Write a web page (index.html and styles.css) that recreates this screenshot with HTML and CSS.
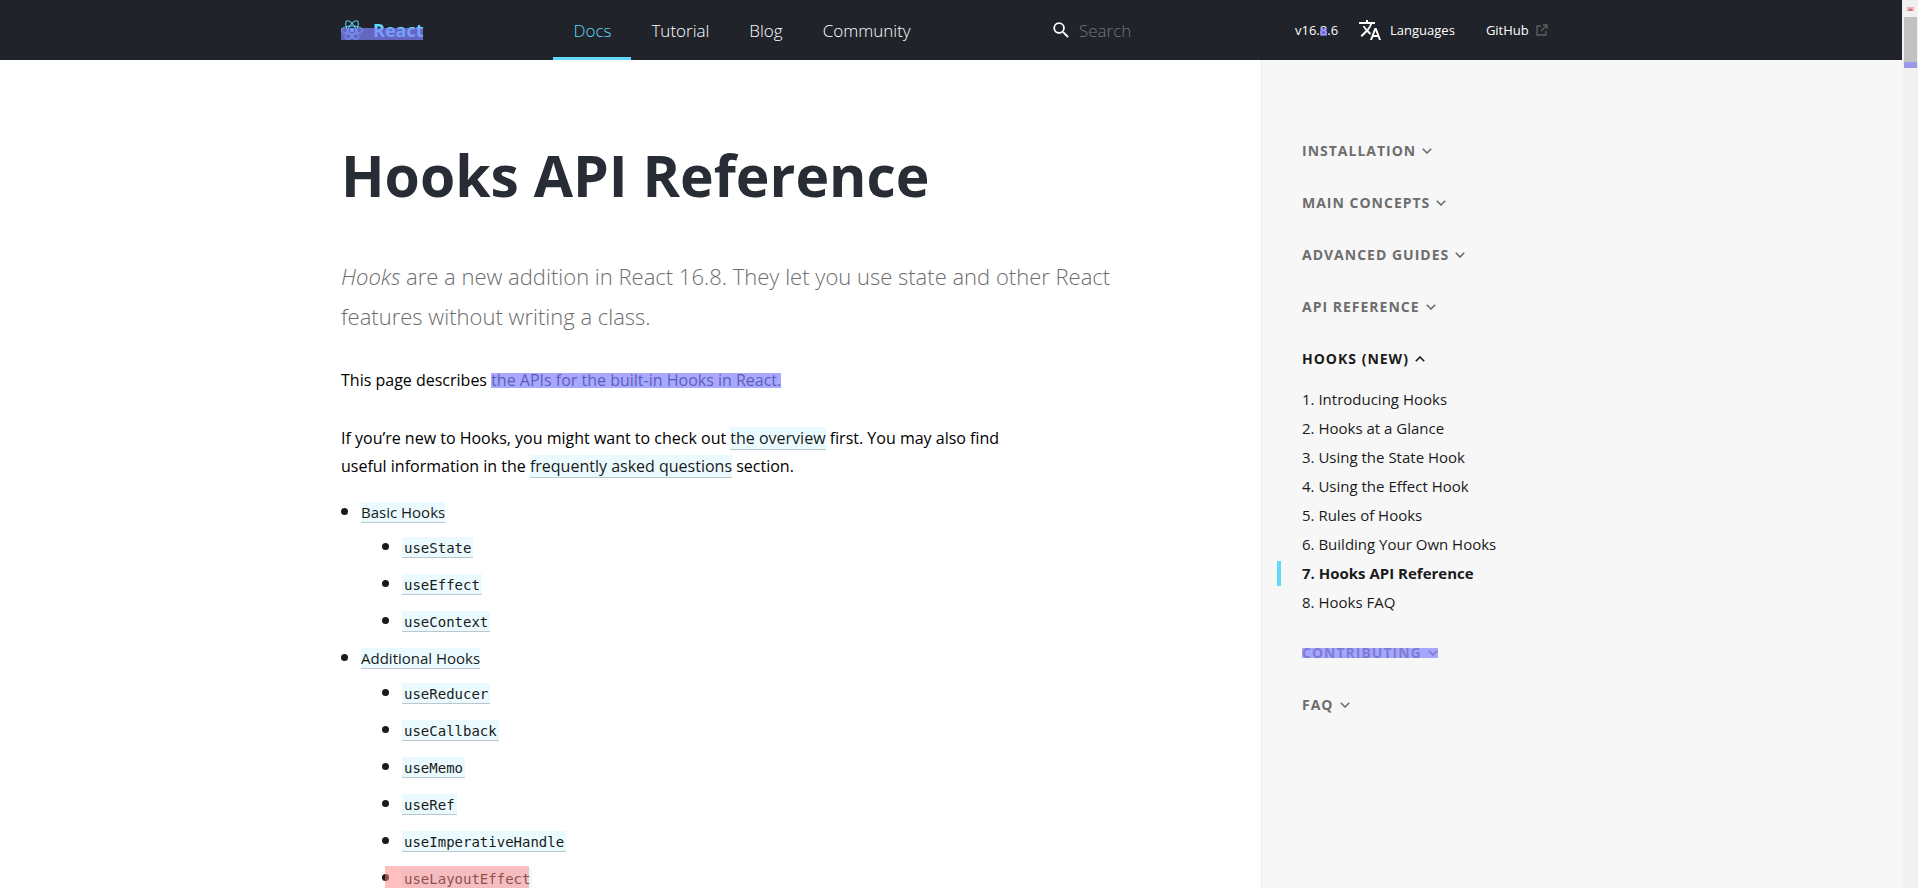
FILE: index.html
```html
<!DOCTYPE html>
<html lang="en">
<head>
<meta charset="utf-8">
<title>Hooks API Reference – React</title>
<link rel="stylesheet" href="styles.css">
</head>
<body>
<svg class="defs" aria-hidden="true">
  <symbol id="chevron" viewBox="0 0 10 6"><path d="M.8.8 5 5 9.200.8" fill="none" stroke="currentColor" stroke-width="1.600"/></symbol>
</svg>
<div class="page">
  <header class="header">
    <a class="brand mark mark-brand" href="#">
      <svg class="brand-logo" viewBox="-11.500 -10.232 23 20.463" aria-hidden="true">
        <circle r="2.050" fill="currentColor"/>
        <g stroke="currentColor" fill="none"><ellipse rx="11" ry="4.200"/><ellipse rx="11" ry="4.200" transform="rotate(60)"/><ellipse rx="11" ry="4.200" transform="rotate(120)"/></g>
      </svg>
      <span>React</span>
    </a>
    <nav class="nav">
      <a class="nav-link active" href="#">Docs</a>
      <a class="nav-link" href="#">Tutorial</a>
      <a class="nav-link" href="#">Blog</a>
      <a class="nav-link" href="#">Community</a>
    </nav>
    <label class="search">
      <svg viewBox="0 0 16 16" aria-hidden="true"><path d="M11.400 10.100h-.7l-.3-.3a5.700 5.700 0 1 0-.6.6l.3.3v.7l4.400 4.400 1.300-1.300zM6.100 10.100a4 4 0 1 1 0-8 4 4 0 0 1 0 8z" fill="#fff"/></svg>
      <input class="search-input" type="search" placeholder="Search" aria-label="Search docs">
    </label>
    <div class="links">
      <a class="version" href="#">v16.<span class="mark mark-digit">8</span>.6</a>
      <a class="languages" href="#">
        <svg viewBox="1 2 22 20" aria-hidden="true"><path d="M12.870 15.070l-2.540-2.510.03-.03A17.520 17.520 0 0 0 14.070 6H17V4h-7V2H8v2H1v1.990h11.170C11.500 7.920 10.440 9.750 9 11.350 8.070 10.320 7.300 9.190 6.690 8h-2c.73 1.630 1.730 3.170 2.980 4.560l-5.090 5.020L4 19l5-5 3.110 3.110.76-2.040zM18.500 10h-2L12 22h2l1.120-3h4.750L21 22h2l-4.500-12zm-2.620 7l1.620-4.330L19.120 17h-3.240z" fill="#fff"/></svg>
        <span>Languages</span>
      </a>
      <a class="github" href="#">
        <span>GitHub</span>
        <svg viewBox="0 0 12 12" aria-hidden="true"><path d="M5 2H1v9h9V7M7 1h4v4M11 1 5 7" fill="none" stroke="#606060" stroke-width="1.300"/></svg>
      </a>
    </div>
  </header>
  <div class="content">
    <main class="article">
      <h1>Hooks API Reference</h1>
      <p class="intro"><em>Hooks</em> are a new addition in React 16.8. They let you use state and other React features without writing a class.</p>
      <p>This page describes <span class="mark mark-text">the APIs for the built-in Hooks in React.</span></p>
      <p class="before-list">If you’re new to Hooks, you might want to check out <a href="#">the overview</a> first. You may also find useful information in the <a href="#">frequently asked questions</a> section.</p>
      <ul class="toc">
        <li><a href="#">Basic Hooks</a>
          <ul>
            <li><a href="#"><code>useState</code></a></li>
            <li><a href="#"><code>useEffect</code></a></li>
            <li><a href="#"><code>useContext</code></a></li>
          </ul>
        </li>
        <li><a href="#">Additional Hooks</a>
          <ul>
            <li><a href="#"><code>useReducer</code></a></li>
            <li><a href="#"><code>useCallback</code></a></li>
            <li><a href="#"><code>useMemo</code></a></li>
            <li><a href="#"><code>useRef</code></a></li>
            <li><a href="#"><code>useImperativeHandle</code></a></li>
            <li><a class="mark mark-item" href="#"><code>useLayoutEffect</code></a></li>
          </ul>
        </li>
      </ul>
    </main>
    <aside class="sidebar">
      <button class="group">Installation<svg class="chevron"><use href="#chevron"/></svg></button>
      <button class="group">Main Concepts<svg class="chevron"><use href="#chevron"/></svg></button>
      <button class="group">Advanced Guides<svg class="chevron"><use href="#chevron"/></svg></button>
      <button class="group">API Reference<svg class="chevron"><use href="#chevron"/></svg></button>
      <div class="section">
        <button class="group open" aria-expanded="true">Hooks (New)<svg class="chevron"><use href="#chevron"/></svg></button>
        <ul class="pages">
          <li><a href="#">1. Introducing Hooks</a></li>
          <li><a href="#">2. Hooks at a Glance</a></li>
          <li><a href="#">3. Using the State Hook</a></li>
          <li><a href="#">4. Using the Effect Hook</a></li>
          <li><a href="#">5. Rules of Hooks</a></li>
          <li><a href="#">6. Building Your Own Hooks</a></li>
          <li class="current"><a href="#" aria-current="page">7. Hooks API Reference</a></li>
          <li><a href="#">8. Hooks FAQ</a></li>
        </ul>
      </div>
      <button class="group mark mark-group">Contributing<svg class="chevron"><use href="#chevron"/></svg></button>
      <button class="group">FAQ<svg class="chevron"><use href="#chevron"/></svg></button>
    </aside>
  </div>
</div>
<div class="scrollbar" aria-hidden="true">
  <svg class="scroll-arrow" viewBox="0 0 7 4"><path d="M0 0h7v4H0z" fill="#f0b4b6"/><path d="M3 1h1v1h1v1h1v1H1V3h1V2h1z" fill="#c97c80"/></svg>
  <div class="thumb"></div>
</div>
</body>
</html>
```
FILE: styles.css
```css
:root {
  --bar: 16px;
  --gutter: max(20px, calc((100vw - var(--bar) - 1220px) / 2));
  --blue-mark: rgba(131, 131, 255, 0.7);
  --red-mark: rgba(255, 127, 127, 0.5);
}

* { box-sizing: border-box; }

body {
  display: flex;
  height: 100vh;
  margin: 0;
  overflow: hidden;
  font-family: "Open Sans", "Noto Sans", sans-serif;
  color: #000;
}

a { color: inherit; text-decoration: none; }
button { border: 0; background: none; font: inherit; cursor: pointer; }
.defs { position: absolute; width: 0; height: 0; }

.page {
  display: flex;
  flex-direction: column;
  flex: 1;
  min-width: 0;
}

/* Header */
.header {
  display: flex;
  align-items: center;
  flex: none;
  height: 60px;
  padding: 0 var(--gutter);
  background: #20232a;
  color: #fff;
}

.brand {
  display: flex;
  align-items: center;
  gap: 10px;
  margin-right: 130px;
  color: #61dafb;
  font-size: 18px;
  font-weight: 700;
  line-height: 20px;
}
.brand-logo { width: 22px; height: 20px; }

.nav { display: flex; flex: 1; height: 60px; }
.nav-link {
  display: flex;
  align-items: center;
  padding: 0 20px;
  font-size: 17px;
  font-weight: 300;
}
.nav-link.active {
  color: #61dafb;
  box-shadow: inset 0 -3px #61dafb;
}

.search { display: flex; align-items: center; gap: 8px; width: 242px; }
.search svg { width: 16px; height: 16px; }
.search-input {
  width: 160px;
  padding: 0 2px;
  border: 0;
  background: none;
  color: #fff;
  font: 300 17px "Open Sans", "Noto Sans", sans-serif;
}
.search-input::placeholder { color: #757575; opacity: 1; }

.links {
  display: flex;
  align-items: center;
  width: 266px;
  font-size: 13px;
  white-space: nowrap;
}
.languages { display: flex; align-items: center; gap: 9px; margin: 0 31px 0 21px; }
.languages svg { width: 22px; height: 20px; }
.github { display: flex; align-items: center; gap: 7px; }
.github svg { width: 12px; height: 12px; }

/* Article */
.content {
  display: grid;
  grid-template-columns: calc(50% + 310px) 1fr;
  flex: 1;
  min-height: 0;
}
.article { padding: 80px 60px 0 var(--gutter); overflow: hidden; }
h1 {
  margin: 0 0 46px;
  color: #282c34;
  font-size: 57px;
  line-height: 70px;
  font-weight: 700;
}
p {
  max-width: 690px;
  margin: 0 0 30px;
  font-size: 16px;
  line-height: 28px;
}
.intro {
  max-width: 800px;
  color: #6d6d6d;
  font-size: 22px;
  line-height: 40px;
  font-weight: 300;
}
.before-list { margin-bottom: 17px; }
p a, .toc a {
  border-bottom: 1px solid rgba(0, 0, 0, 0.2);
  background: rgba(187, 239, 253, 0.3);
  color: #1a1a1a;
}
.toc, .toc ul { margin: 0; padding: 0 0 0 20px; }
.toc { font-size: 15px; list-style: disc; color: #1a1a1a; }
.toc ul { padding-left: 41px; list-style: disc; }
.toc li { line-height: 28px; }
.toc li::marker { font-size: 19px; }
.toc > li > ul { margin-top: 6px; }
.toc ul li { margin-bottom: 8px; }
code {
  padding: 0 2px;
  font: 14px "DejaVu Sans Mono", monospace;
}

/* Sidebar */
.sidebar {
  display: flex;
  flex-direction: column;
  align-items: flex-start;
  gap: 32px;
  padding: 81px 20px 0 40px;
  border-left: 1px solid #ececec;
  background: #f7f7f7;
}
.group {
  display: flex;
  align-items: center;
  gap: 6px;
  padding: 0;
  color: #6d6d6d;
  font-size: 14px;
  line-height: 20px;
  font-weight: 700;
  letter-spacing: 1px;
  text-transform: uppercase;
}
.chevron { width: 10px; height: 6px; }
.group.open { color: #1a1a1a; }
.open .chevron { transform: rotate(180deg); }
.pages {
  margin: 16px 0 -6px;
  padding: 0;
  list-style: none;
  color: #1a1a1a;
  font-size: 15px;
  line-height: 29px;
}
.current { position: relative; color: #1a1a1a; font-weight: 700; }
.current::before {
  content: "";
  position: absolute;
  top: 2px;
  left: -25px;
  width: 4px;
  height: 25px;
  background: #61dafb;
}

/* Highlights laid over content */
.mark { position: relative; }
.mark::after { content: ""; position: absolute; background: var(--blue-mark); }
.mark-brand::after { inset: 8px 0 0; }
.mark-digit::after { inset: 7px 0 3px; }
.mark-text::after { inset: 4px 0 3px; }
.mark-group::after { inset: 5px 0; }
.mark-item::after { inset: -2px 3px -2px -17px; background: var(--red-mark); }

/* Scroll track */
.scrollbar {
  display: flex;
  flex-direction: column;
  align-items: center;
  width: var(--bar);
  padding-top: 7px;
  background: #f1f1f1;
}
.scroll-arrow { width: 7px; height: 4px; }
.thumb {
  width: 13px;
  height: 51px;
  margin-top: 6px;
  border-bottom: 6px solid #9a9aed;
  background: #c1c1c1;
}
```
